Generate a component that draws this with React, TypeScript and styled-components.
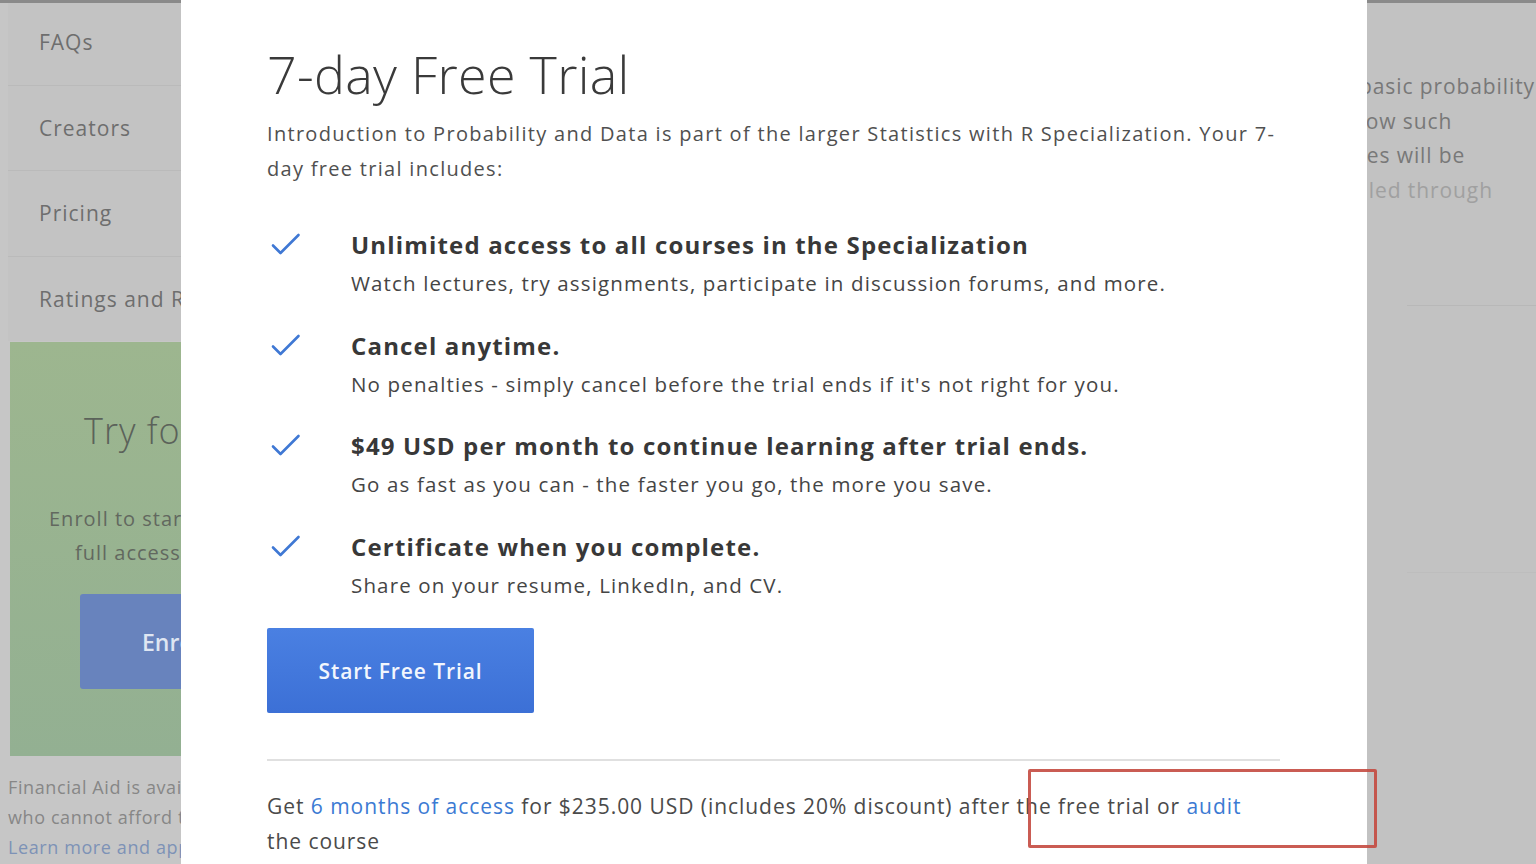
import React from 'react';
import styled, { createGlobalStyle } from 'styled-components';

const GlobalStyle = createGlobalStyle`
  html, body {
    margin: 0;
    padding: 0;
    height: 864px;
    overflow: hidden;
    background: #c2c2c2;
    font-family: "Open Sans", "Noto Sans", sans-serif;
  }
`;

const Page = styled.div`
  position: relative;
  display: flex;
  height: 864px;
  overflow: hidden;
`;

/* ---------- dimmed page behind the modal (left) ---------- */

const LeftColumn = styled.div`
  width: 181px;
  flex-shrink: 0;
  overflow: hidden;
  background: #c6c6c6;
  border-top: 3px solid #8a8a8a;
  box-sizing: border-box;
`;

const SideNav = styled.nav`
  margin-left: 8px;
  margin-top: -3px;
  background: #c3c3c3;
`;

const NavItem = styled.div`
  height: 84.5px;
  display: flex;
  align-items: center;
  padding-left: 31px;
  font-size: 21px;
  letter-spacing: 1px;
  color: #6e6e6e;
  white-space: nowrap;
  border-bottom: 1px solid #bababa;
  &:last-child {
    border-bottom: none;
  }
`;

const TryBox = styled.div`
  margin: 1px 0 0 10px;
  height: 414px;
  background: linear-gradient(180deg, #9db68f 0%, #93b092 100%);
  padding-top: 64px;
  box-sizing: border-box;
  white-space: nowrap;
`;

const TryTitle = styled.div`
  padding-left: 74px;
  font-size: 36px;
  line-height: 50px;
  color: #5b625a;
  font-weight: 300;
  letter-spacing: 1px;
`;

const TryText = styled.div<{ $indent: number }>`
  padding-left: ${p => p.$indent}px;
  font-size: 20px;
  line-height: 34px;
  letter-spacing: 1px;
  color: #62685f;
`;

const TryTextGroup = styled.div`
  margin-top: 46px;
`;

const EnrollButton = styled.div`
  margin: 24px 0 0 70px;
  height: 95px;
  width: 200px;
  border-radius: 3px;
  background: #6883bd;
  color: #dfe6f2;
  font-size: 23px;
  font-weight: 600;
  display: flex;
  align-items: center;
  padding-left: 62px;
  box-sizing: border-box;
`;

const AidText = styled.div`
  padding: 16px 0 0 8px;
  font-size: 18px;
  line-height: 30px;
  letter-spacing: 0.6px;
  color: #878787;
  white-space: nowrap;
`;

const AidLink = styled.span`
  color: #7d92b6;
`;

/* ---------- dimmed page behind the modal (right) ---------- */

const RightColumn = styled.div`
  flex: 1;
  overflow: hidden;
  background: #c2c2c2;
  border-top: 3px solid #8a8a8a;
`;

const RightText = styled.div`
  margin-top: 66px;
  font-size: 21px;
  line-height: 34.5px;
  letter-spacing: 0.9px;
  white-space: nowrap;
`;

const RightLine = styled.div<{ $shift: number; $faded?: boolean }>`
  margin-left: ${p => p.$shift}px;
  color: ${p => (p.$faded ? '#a0a0a0' : '#787878')};
`;

const RightRule = styled.div<{ $top: number; $color: string }>`
  margin-top: ${p => p.$top}px;
  margin-left: 40px;
  height: 1px;
  background: ${p => p.$color};
`;

/* ---------- modal ---------- */

const Modal = styled.div`
  width: 1186px;
  flex-shrink: 0;
  background: #ffffff;
  padding: 38px 0 0 86px;
  box-sizing: border-box;
`;

const Content = styled.div`
  width: 1013px;
`;

const Title = styled.h1`
  margin: 0;
  font-size: 52px;
  line-height: 72px;
  font-weight: 300;
  color: #3a3a3a;
  letter-spacing: 0.3px;
`;

const Intro = styled.p`
  margin: 6px 0 0;
  font-size: 20px;
  line-height: 35px;
  letter-spacing: 1.3px;
  color: #505050;
`;

const Features = styled.ul`
  list-style: none;
  margin: 40px 0 0;
  padding: 0;
`;

const Feature = styled.li`
  display: flex;
  margin-bottom: 24.5px;
`;

const CheckCell = styled.div`
  width: 84px;
  flex-shrink: 0;
  padding: 7px 0 0 4px;
  box-sizing: border-box;
`;

const FeatureBody = styled.div`
  display: flex;
  flex-direction: column;
`;

const FeatureTitle = styled.div`
  font-size: 24px;
  line-height: 38px;
  font-weight: 700;
  letter-spacing: 1.17px;
  color: #383838;
`;

const FeatureText = styled.div`
  font-size: 20.5px;
  line-height: 38px;
  letter-spacing: 1.15px;
  color: #454545;
`;

const StartButton = styled.button`
  width: 267px;
  height: 85px;
  border: none;
  border-radius: 2px;
  background: linear-gradient(180deg, #4a80e2 0%, #3c70d6 100%);
  color: #f2f6fd;
  font-family: inherit;
  font-size: 21px;
  font-weight: 600;
  letter-spacing: 0.9px;
  cursor: pointer;
`;

const Divider = styled.hr`
  margin: 46px 0 0;
  border: none;
  border-top: 2px solid #e0e0e0;
`;

const Footnote = styled.p`
  margin: 28px 0 0;
  font-size: 21px;
  line-height: 35px;
  letter-spacing: 0.95px;
  color: #4a4a4a;
`;

const Link = styled.a`
  color: #3b7ad3;
  text-decoration: none;
`;

/* annotation drawn over the screenshot */
const Highlight = styled.div`
  position: absolute;
  left: 1028px;
  top: 769px;
  width: 349px;
  height: 79px;
  border: 3px solid rgba(196, 74, 64, 0.9);
  border-radius: 2px;
  box-sizing: border-box;
  pointer-events: none;
`;

const Check = () => (
  <svg width="30" height="24" viewBox="0 0 30 24" fill="none">
    <path d="M2 12.5 L9.5 20 L27.5 2" stroke="#3f78d4" strokeWidth="2.6" strokeLinecap="round" strokeLinejoin="round" />
  </svg>
);

const features = [
  {
    title: 'Unlimited access to all courses in the Specialization',
    text: 'Watch lectures, try assignments, participate in discussion forums, and more.',
  },
  {
    title: 'Cancel anytime.',
    text: "No penalties - simply cancel before the trial ends if it's not right for you.",
  },
  {
    title: '$49 USD per month to continue learning after trial ends.',
    text: 'Go as fast as you can - the faster you go, the more you save.',
  },
  {
    title: 'Certificate when you complete.',
    text: 'Share on your resume, LinkedIn, and CV.',
  },
];

const App = () => {
  return (
    <>
      <GlobalStyle />
      <Page>
        <LeftColumn>
          <SideNav>
            <NavItem>FAQs</NavItem>
            <NavItem>Creators</NavItem>
            <NavItem>Pricing</NavItem>
            <NavItem>Ratings and Reviews</NavItem>
          </SideNav>
          <TryBox>
            <TryTitle>Try for Free</TryTitle>
            <TryTextGroup>
              <TryText $indent={39}>Enroll to start your 7-day</TryText>
              <TryText $indent={65}>full access free trial</TryText>
            </TryTextGroup>
            <EnrollButton>Enroll</EnrollButton>
          </TryBox>
          <AidText>
            <div>Financial Aid is available</div>
            <div>who cannot afford the fee.</div>
            <AidLink>Learn more and apply.</AidLink>
          </AidText>
        </LeftColumn>

        <Modal>
          <Content>
            <Title>7-day Free Trial</Title>
            <Intro>
              Introduction to Probability and Data is part of the larger Statistics with R Specialization. Your 7-day free trial includes:
            </Intro>
            <Features>
              {features.map(f => (
                <Feature key={f.title}>
                  <CheckCell>
                    <Check />
                  </CheckCell>
                  <FeatureBody>
                    <FeatureTitle>{f.title}</FeatureTitle>
                    <FeatureText>{f.text}</FeatureText>
                  </FeatureBody>
                </Feature>
              ))}
            </Features>
            <StartButton>Start Free Trial</StartButton>
            <Divider />
            <Footnote>
              Get <Link href="#">6 months of access</Link> for $235.00 USD (includes 20% discount) after the free trial or <Link href="#">audit</Link> the course
            </Footnote>
          </Content>
        </Modal>

        <RightColumn>
          <RightText>
            <RightLine $shift={-8}>basic probability</RightLine>
            <RightLine $shift={-15}>how such</RightLine>
            <RightLine $shift={-21}>ities will be</RightLine>
            <RightLine $shift={-52} $faded>handled through</RightLine>
          </RightText>
          <RightRule $top={98} $color="#b8b8b8" />
          <RightRule $top={266} $color="#bdbdbd" />
        </RightColumn>

        <Highlight />
      </Page>
    </>
  );
};

export default App;
